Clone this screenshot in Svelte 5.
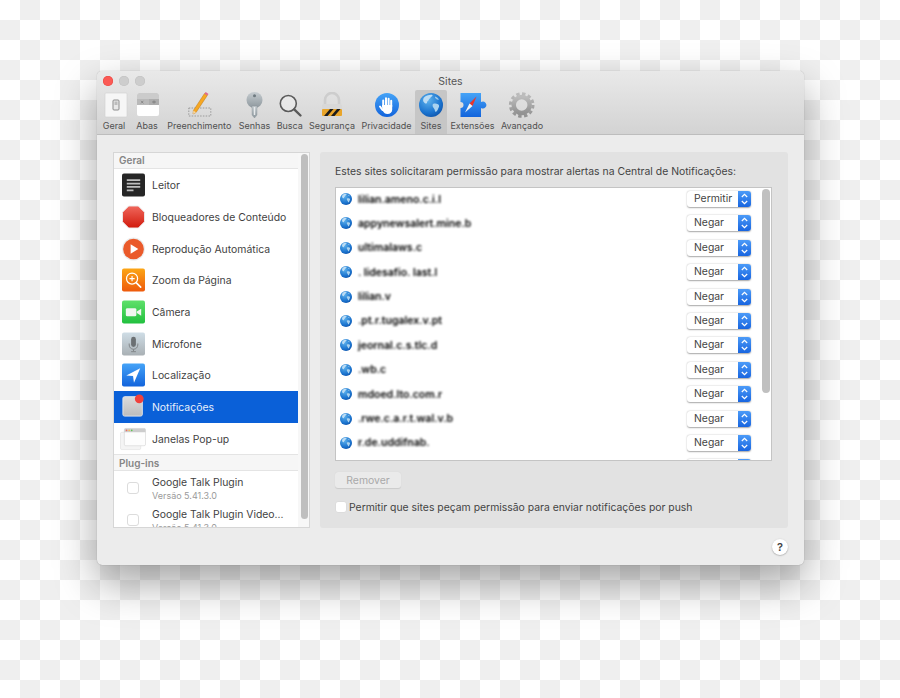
<script>
  const tools = [
    { label: 'Geral', w: 34 },
    { label: 'Abas', w: 32 },
    { label: 'Preenchimento', w: 72.5 },
    { label: 'Senhas', w: 38 },
    { label: 'Busca', w: 32.5 },
    { label: 'Segurança', w: 52 },
    { label: 'Privacidade', w: 57 },
    { label: 'Sites', w: 32 },
    { label: 'Extensões', w: 51 },
    { label: 'Avançado', w: 48 }
  ];
  const sites = [
    ['lilian.ameno.c.i.l', 'Permitir'],
    ['appynewsalert.mine.b', 'Negar'],
    ['ultimalaws.c', 'Negar'],
    ['. lidesafio. last.l', 'Negar'],
    ['lilian.v', 'Negar'],
    ['.pt.r.tugalex.v.pt', 'Negar'],
    ['jeornal.c.s.tlc.d', 'Negar'],
    ['.wb.c', 'Negar'],
    ['mdoed.lto.com.r', 'Negar'],
    ['.rwe.c.a.r.t.wal.v.b', 'Negar'],
    ['r.de.uddifnab.', 'Negar'],
    ['', 'Negar']
  ];
</script>

{#snippet globe()}
  <circle cx="12" cy="12" r="12" fill="url(#globeFill)" />
  <path d="M5 4.5c2-2 5-3 8-2.8 1 .6.6 1.6-.6 2-1 .3-.6 1.4-1.6 1.8-1.2.5-.8 1.8-2 2.6-1 .7-.4 2-1.4 2.4-1 .3-2.2-.8-3-2C4 7.500 4 6 5 4.500z" fill="#bcdcf4" />
  <path d="M14 11c1.500-.8 3.500-.6 5 .2 1 .6 1.500 1.800.8 3-.8 1.300-1 3-2.400 4.300-.8.7-1.400.2-1.500-.8-.1-1.500-.9-2-1.600-3.200-.6-1-1.100-2.700-.3-3.500z" fill="#a9d2ef" />
  <path d="M16 3.500c1.500.4 3 1.500 4 3-.9.4-2.200 0-3-.8-.6-.6-1.400-1.400-1-2.200z" fill="#9cc9ea" />
{/snippet}

<svg class="defs" width="0" height="0" aria-hidden="true">
  <defs>
    <radialGradient id="globeFill" cx="0.38" cy="0.3" r="0.8">
      <stop offset="0" stop-color="#5eb2ec" />
      <stop offset="0.65" stop-color="#1b74cf" />
      <stop offset="1" stop-color="#0c4fa6" />
    </radialGradient>
    <linearGradient id="blueV" x1="0" y1="0" x2="0" y2="1">
      <stop offset="0" stop-color="#45a3f7" />
      <stop offset="1" stop-color="#1264dc" />
    </linearGradient>
    <linearGradient id="silver" x1="0" y1="0" x2="0" y2="1">
      <stop offset="0" stop-color="#c6ccd0" />
      <stop offset="1" stop-color="#8d979d" />
    </linearGradient>
    <linearGradient id="gearFill" x1="0" y1="0" x2="0" y2="1">
      <stop offset="0" stop-color="#bcbcbc" />
      <stop offset="1" stop-color="#929292" />
    </linearGradient>
    <linearGradient id="stopFill" x1="0" y1="0" x2="0" y2="1">
      <stop offset="0" stop-color="#f0675c" />
      <stop offset="1" stop-color="#d11a0c" />
    </linearGradient>
    <linearGradient id="orangeFill" x1="0" y1="0" x2="0" y2="1">
      <stop offset="0" stop-color="#fca616" />
      <stop offset="1" stop-color="#ee5a0c" />
    </linearGradient>
    <linearGradient id="greenFill" x1="0" y1="0" x2="0" y2="1">
      <stop offset="0" stop-color="#5fe06a" />
      <stop offset="1" stop-color="#22c03f" />
    </linearGradient>
    <linearGradient id="micFill" x1="0" y1="0" x2="0" y2="1">
      <stop offset="0" stop-color="#cfdde6" />
      <stop offset="1" stop-color="#a9b0b4" />
    </linearGradient>
    <linearGradient id="greyFill" x1="0" y1="0" x2="0" y2="1">
      <stop offset="0" stop-color="#dcdcdc" />
      <stop offset="1" stop-color="#bdbdbd" />
    </linearGradient>
  </defs>
</svg>

{#snippet toolIcon(name)}
  <svg class="tool-icon" width="30" height="26" viewBox="0 0 30 26">
    {#if name === 'Geral'}
      <rect x="6" y="1" width="22" height="24" rx="1" fill="#f6f6f6" stroke="#d2d2d2" stroke-width=".6" />
      <rect x="14" y="8" width="6" height="10" rx="1" fill="#e8e8e8" stroke="#8c8c8c" stroke-width="1" />
      <rect x="15.500" y="9.500" width="3" height="3.500" fill="#bcbcbc" />
    {:else if name === 'Abas'}
      <rect x="5" y="1" width="22" height="23" rx="2" fill="#fff" />
      <path d="M5 3a2 2 0 0 1 2-2h18a2 2 0 0 1 2 2v4H5z" fill="#cbcbcb" />
      <rect x="5" y="7" width="22" height="6" fill="#b9b9b9" />
      <path d="M9 8.800l2.400 2.600M11.400 8.800l-2.400 2.600" stroke="#777" stroke-width=".7" />
      <rect x="17" y="7" width="10" height="6" fill="#adadad" />
      <path d="M20 10h4M22 8.400v3.200" stroke="#777" stroke-width=".7" />
    {:else if name === 'Preenchimento'}
      <rect x="4.800" y="16" width="22" height="8" fill="none" stroke="#8a8a8a" stroke-width=".8" stroke-dasharray="1.500 1.300" />
      <path d="M20.500 1.500l2.800 1.900L12 20.500l-3 1.500.4-3.500z" fill="#f7a823" stroke="#b9761a" stroke-width=".5" />
      <path d="M20.500 1.500l1.200-1.500 2.800 1.900-1.200 1.500z" fill="#e0688c" />
      <path d="M9.400 18.500L9 22l3-1.500z" fill="#f2d7a8" />
    {:else if name === 'Senhas'}
      <circle cx="14.500" cy="8" r="8" fill="url(#silver)" />
      <circle cx="14.500" cy="3.800" r="1.500" fill="#6f7a80" />
      <path d="M12 14h5v9l-2.500 3-2.500-3z" fill="url(#silver)" stroke="#89949a" stroke-width=".4" />
      <rect x="13.800" y="15" width="1.400" height="8" fill="#e7eaec" />
    {:else if name === 'Busca'}
      <circle cx="13.300" cy="11.500" r="8" fill="#f3f3f3" fill-opacity=".45" stroke="#5a5a5a" stroke-width="1.600" />
      <path d="M19.200 17.300L25.500 23.500" stroke="#5a5a5a" stroke-width="2.400" stroke-linecap="round" />
    {:else if name === 'Segurança'}
      <path d="M8 13V8a7 7 0 0 1 14 0v5" fill="none" stroke="#cdcdcd" stroke-width="2.600" />
      <rect x="5" y="12" width="20" height="12" rx="1.500" fill="#d8d8d8" />
      <rect x="5" y="17" width="20" height="7" rx="1" fill="#e9a52a" />
      <path d="M7 24l6-7h3.500l-6 7zM14 24l6-7h3.500l-6 7z" fill="#1c1c1c" />
    {:else if name === 'Privacidade'}
      <circle cx="15" cy="13" r="12" fill="url(#blueV)" />
      <g stroke="#fff" stroke-width="2" stroke-linecap="round" fill="none">
        <path d="M11.200 8.500v6M14 6.200v8M16.600 6.800v7.500M19.200 8.800v6" />
        <path d="M8 14.500l2.500 3.500" />
      </g>
      <path d="M10 13h10.200v4.500c0 2.800-2 4.500-4.700 4.500-2.300 0-3.600-1-5-3.500z" fill="#fff" />
    {:else if name === 'Sites'}
      <g transform="translate(3 1)">{@render globe()}</g>
    {:else if name === 'Extensões'}
      <path d="M2.500 1h20.500v9a3.500 3.500 0 1 1 0 6v9H2.500v-9a3 3 0 0 0 0-6z" fill="url(#blueV)" />
      <path d="M18.500 4.500l-4 9.500-3-2.500z" fill="#e8352c" />
      <path d="M7 20.500l4.500-9 3 2.500z" fill="#f4f4f4" />
    {:else if name === 'Avançado'}
      <g fill="none">
        <circle cx="14.700" cy="13" r="11.300" stroke="url(#gearFill)" stroke-width="3" stroke-dasharray="3.400 2.520" />
        <circle cx="14.700" cy="13" r="8" stroke="url(#gearFill)" stroke-width="4.500" />
      </g>
    {/if}
  </svg>
{/snippet}

<div class="page">
  <div class="window">
    <header class="chrome">
      <div class="titlebar">
        <div class="lights">
          <span class="light red"></span>
          <span class="light"></span>
          <span class="light"></span>
        </div>
        <div class="title">Sites</div>
        <div></div>
      </div>
      <nav class="tools">
        {#each tools as t}
          <div class="tool" class:active={t.label === 'Sites'} style="width:{t.w}px">
            {@render toolIcon(t.label)}
            <span>{t.label}</span>
          </div>
        {/each}
      </nav>
    </header>

    <div class="body">
      <div class="columns">
        <aside class="sidebar">
          <div class="list">
            <div class="group first">Geral</div>

            <div class="row">
              <svg class="ico" viewBox="0 0 24 24"><rect width="24" height="24" rx="2" fill="#262626" /><path d="M5 7h14M5 10.500h14M5 14h14M5 17.500h7" stroke="#bdbdbd" stroke-width="1.800" /></svg>
              <span>Leitor</span>
            </div>
            <div class="row">
              <svg class="ico" viewBox="0 0 24 24"><path d="M7 .5h10L23.500 7v10L17 23.500H7L.5 17V7z" fill="url(#stopFill)" stroke="#ececec" stroke-width="1" /></svg>
              <span>Bloqueadores de Conteúdo</span>
            </div>
            <div class="row">
              <svg class="ico" viewBox="0 0 24 24"><circle cx="12" cy="12" r="12" fill="#ececec" /><circle cx="12" cy="12" r="10.800" fill="#ea5a2a" /><path d="M9 7l8 5-8 5z" fill="#fff" /></svg>
              <span>Reprodução Automática</span>
            </div>
            <div class="row">
              <svg class="ico" viewBox="0 0 24 24"><rect width="24" height="24" rx="2" fill="url(#orangeFill)" /><circle cx="10.500" cy="10.500" r="5.800" fill="none" stroke="#fff" stroke-width="1.300" /><path d="M10.500 7.800v5.400M7.800 10.500h5.400" stroke="#fff" stroke-width="1.200" /><path d="M15 15l4.500 4.500" stroke="#fff" stroke-width="1.700" stroke-linecap="round" /></svg>
              <span>Zoom da Página</span>
            </div>
            <div class="row">
              <svg class="ico" viewBox="0 0 24 24"><rect width="24" height="24" rx="2" fill="url(#greenFill)" /><rect x="4" y="8" width="11" height="8.500" rx="1.500" fill="#f1f6f1" /><path d="M15.500 11.500l4.500-3v7.500l-4.500-3z" fill="#f1f6f1" /></svg>
              <span>Câmera</span>
            </div>
            <div class="row">
              <svg class="ico" viewBox="0 0 24 24"><rect width="24" height="24" rx="2" fill="url(#micFill)" /><rect x="9.500" y="4.500" width="5" height="10.500" rx="2.500" fill="#6b7073" /><path d="M7.500 11.500v1.500a4.500 4.500 0 0 0 9 0v-1.500M12 17.500v2M9.500 20h5" fill="none" stroke="#7f8487" stroke-width="1" /></svg>
              <span>Microfone</span>
            </div>
            <div class="row">
              <svg class="ico" viewBox="0 0 24 24"><rect width="24" height="24" rx="2" fill="url(#blueV)" /><path d="M19 5L4.500 12.500l7 .5 1 7z" fill="#fff" /></svg>
              <span>Localização</span>
            </div>
            <div class="row selected">
              <svg class="ico notif" viewBox="0 0 26 26"><rect x="1" y="3" width="22" height="22" rx="2" fill="url(#greyFill)" stroke="#e9e9e9" stroke-width="1" /><circle cx="19.500" cy="5.500" r="5" fill="#f0413c" /></svg>
              <span>Notificações</span>
            </div>
            <div class="row">
              <svg class="ico popup" viewBox="0 0 27 24"><rect x="0.500" y="5" width="21" height="18" rx="1.500" fill="#f4f4f4" stroke="#dedede" stroke-width=".6" /><rect x="4.500" y="1" width="22" height="18" rx="1.500" fill="#fdfdfd" stroke="#cfcfcf" stroke-width=".6" /><path d="M4.500 5V2.500A1.500 1.500 0 0 1 6 1h19a1.500 1.500 0 0 1 1.500 1.500V5z" fill="#cdcdcd" /><circle cx="6.800" cy="3" r=".9" fill="#ee6a5f" /><circle cx="9.500" cy="3" r=".9" fill="#f5bd4f" /><circle cx="12.200" cy="3" r=".9" fill="#61c454" /></svg>
              <span>Janelas Pop-up</span>
            </div>

            <div class="group">Plug-ins</div>

            <div class="row plugin">
              <span class="box"></span>
              <div class="plugin-text"><span>Google Talk Plugin</span><small>Versão 5.41.3.0</small></div>
            </div>
            <div class="row plugin">
              <span class="box"></span>
              <div class="plugin-text"><span>Google Talk Plugin Video...</span><small>Versão 5.41.3.0</small></div>
            </div>
          </div>
          <div class="side-track"><div class="side-thumb"></div></div>
        </aside>

        <section class="panel">
          <p class="intro">Estes sites solicitaram permissão para mostrar alertas na Central de Notificações:</p>
          <div class="table">
            <div class="rows">
              {#each sites as s}
                <div class="site">
                  <svg class="globe" width="12" height="12" viewBox="0 0 24 24">{@render globe()}</svg>
                  <span class="host">{s[0]}</span>
                  <div class="select">
                    <span class="value">{s[1]}</span>
                    <span class="stepper">
                      <svg width="13" height="16" viewBox="0 0 13 16"><path d="M3.800 6L6.500 3.300 9.200 6M3.800 10l2.700 2.700L9.200 10" fill="none" stroke="#fff" stroke-width="1.200" /></svg>
                    </span>
                  </div>
                </div>
              {/each}
            </div>
            <div class="table-thumb"></div>
          </div>
          <button class="remove" disabled>Remover</button>
          <label class="push"><span class="box small"></span>Permitir que sites peçam permissão para enviar notificações por push</label>
        </section>
      </div>
      <div class="help-row"><span class="help">?</span></div>
    </div>
  </div>
</div>

<style>
  :global(body) {
    margin: 0;
  }
  .defs {
    position: absolute;
  }
  .page {
    box-sizing: border-box;
    width: 900px;
    height: 698px;
    overflow: hidden;
    padding: 71px 0 0 97px;
    background: conic-gradient(#efefef 25%, #fff 0 50%, #efefef 0 75%, #fff 0) 0 0 / 40px 40px;
    font-family: Inter, "Liberation Sans", sans-serif;
    color: #3f3f3f;
  }
  .window {
    width: 707px;
    height: 494px;
    border-radius: 5px;
    background: #ececec;
    overflow: hidden;
    box-shadow: 0 18px 42px rgba(0, 0, 0, 0.36), 0 0 1px rgba(0, 0, 0, 0.35);
  }
  .chrome {
    height: 64px;
    box-sizing: border-box;
    background: linear-gradient(#e9e9e9, #d3d3d3);
    border-bottom: 1px solid #bdbdbd;
  }
  .titlebar {
    height: 19px;
    display: grid;
    grid-template-columns: 1fr auto 1fr;
    align-items: center;
    padding-top: 3px;
    box-sizing: border-box;
  }
  .lights {
    display: flex;
    gap: 6px;
    padding-left: 6px;
    margin-top: -2px;
  }
  .light {
    width: 10px;
    height: 10px;
    border-radius: 50%;
    background: #cdcdcd;
    box-shadow: inset 0 0 0 0.5px #c0c0c0;
  }
  .light.red {
    background: #fb5a55;
    box-shadow: inset 0 0 0 0.5px #e8453f;
  }
  .title {
    font-size: 10.500px;
    color: #555;
    line-height: 14px;
  }
  .tools {
    display: flex;
    height: 44px;
  }
  .tool {
    display: flex;
    flex-direction: column;
    align-items: center;
    padding-top: 2px;
    box-sizing: border-box;
    flex: none;
  }
  .tool.active {
    background: #c6c6c6;
    border-radius: 2px 2px 0 0;
  }
  .tool span {
    font-size: 9px;
    line-height: 12px;
    margin-top: 2px;
    color: #505050;
    white-space: nowrap;
  }
  .tool-icon {
    display: block;
    flex: none;
  }
  .body {
    padding: 17px 16px 0;
  }
  .columns {
    display: flex;
    gap: 10px;
    height: 376px;
  }
  .sidebar {
    box-sizing: border-box;
    width: 197px;
    display: flex;
    background: #f7f7f7;
    border: 1px solid #d6d6d6;
    overflow: hidden;
  }
  .list {
    width: 184px;
    flex: none;
    background: #fff;
    overflow: hidden;
  }
  .group {
    box-sizing: border-box;
    height: 17px;
    line-height: 16px;
    padding-left: 5px;
    font-size: 10px;
    font-weight: 600;
    color: #858585;
    background: #f6f6f6;
    border-top: 1px solid #e4e4e4;
    border-bottom: 1px solid #e4e4e4;
  }
  .group.first {
    height: 16.300px;
    line-height: 15px;
    border-top: 0;
  }
  .row {
    box-sizing: border-box;
    height: 31.700px;
    display: flex;
    align-items: center;
    font-size: 10.400px;
    padding-left: 8px;
    gap: 7px;
    white-space: nowrap;
  }
  .row > span:last-child {
    padding-top: 1px;
  }
  .row.selected {
    background: #0a60d8;
    color: #e9f0fb;
  }
  .ico {
    width: 23px;
    height: 24px;
    flex: none;
  }
  .ico.notif {
    width: 23px;
    height: 23px;
    margin-top: -2px;
  }
  .ico.popup {
    width: 26px;
    margin-left: -2px;
    margin-right: -1px;
  }
  .plugin {
    height: 32.300px;
    padding-left: 13px;
    gap: 13px;
  }
  .box {
    box-sizing: border-box;
    width: 12px;
    height: 12px;
    flex: none;
    display: block;
    background: #fff;
    border: 1px solid #dcdcdc;
    border-radius: 3px;
  }
  .plugin-text {
    display: flex;
    flex-direction: column;
    line-height: 13px;
    margin-top: 2px;
  }
  .plugin-text small {
    font-size: 9px;
    color: #9a9a9a;
  }
  .side-track {
    flex: 1;
    padding: 1px 2px 0 3px;
  }
  .side-thumb {
    height: 365px;
    width: 7px;
    border-radius: 4px;
    background: #bfbfbf;
  }
  .panel {
    box-sizing: border-box;
    width: 468px;
    padding: 13px 16px 0 15px;
    background: #e2e2e2;
    border-radius: 3px;
  }
  .intro {
    margin: 0 0 8px;
    font-size: 10.400px;
    line-height: 14px;
    white-space: nowrap;
    color: #444;
  }
  .table {
    position: relative;
    box-sizing: border-box;
    height: 274px;
    background: #fff;
    border: 1px solid #c4c4c4;
    overflow: hidden;
  }
  .rows {
    margin-top: -1.200px;
  }
  .site {
    box-sizing: border-box;
    height: 24.400px;
    display: flex;
    align-items: center;
    padding-left: 4px;
    padding-right: 20px;
  }
  .globe {
    flex: none;
  }
  .host {
    margin-left: 6px;
    font-size: 10.500px;
    font-weight: 600;
    color: #111;
    filter: blur(1.100px) contrast(1.4);
    white-space: nowrap;
  }
  .select {
    margin-left: auto;
    width: 64px;
    height: 16px;
    display: flex;
    background: #fff;
    border-radius: 3px;
    box-shadow: 0 0.500px 1.500px rgba(0, 0, 0, 0.35);
    overflow: hidden;
  }
  .value {
    flex: 1;
    font-size: 10.400px;
    line-height: 16px;
    padding-left: 7px;
    color: #444;
  }
  .stepper {
    width: 13px;
    height: 16px;
    background: linear-gradient(#4c9bf8, #1865e0);
  }
  .stepper svg {
    display: block;
  }
  .table-thumb {
    position: absolute;
    top: 1px;
    right: 1px;
    width: 8px;
    height: 204px;
    border-radius: 4px;
    background: #c0c0c0;
  }
  .remove {
    display: block;
    margin: 11px 0 0;
    width: 66px;
    height: 16px;
    padding: 0;
    border: 0;
    border-radius: 3px;
    background: #eaeaea;
    box-shadow: 0 0.500px 1px rgba(0, 0, 0, 0.1);
    font: 10.400px Inter, "Liberation Sans", sans-serif;
    color: #a9a9a9;
  }
  .push {
    margin-top: 12px;
    display: flex;
    align-items: center;
    gap: 2px;
    height: 14px;
    font-size: 10.400px;
    color: #444;
    white-space: nowrap;
  }
  .box.small {
    width: 12px;
    height: 12px;
  }
  .help-row {
    display: flex;
    justify-content: flex-end;
    margin-top: 11px;
  }
  .help {
    width: 16px;
    height: 16px;
    border-radius: 50%;
    background: #fff;
    box-shadow: 0 0.500px 1.500px rgba(0, 0, 0, 0.35);
    text-align: center;
    font-size: 11px;
    font-weight: 600;
    line-height: 16px;
    color: #444;
  }
</style>
